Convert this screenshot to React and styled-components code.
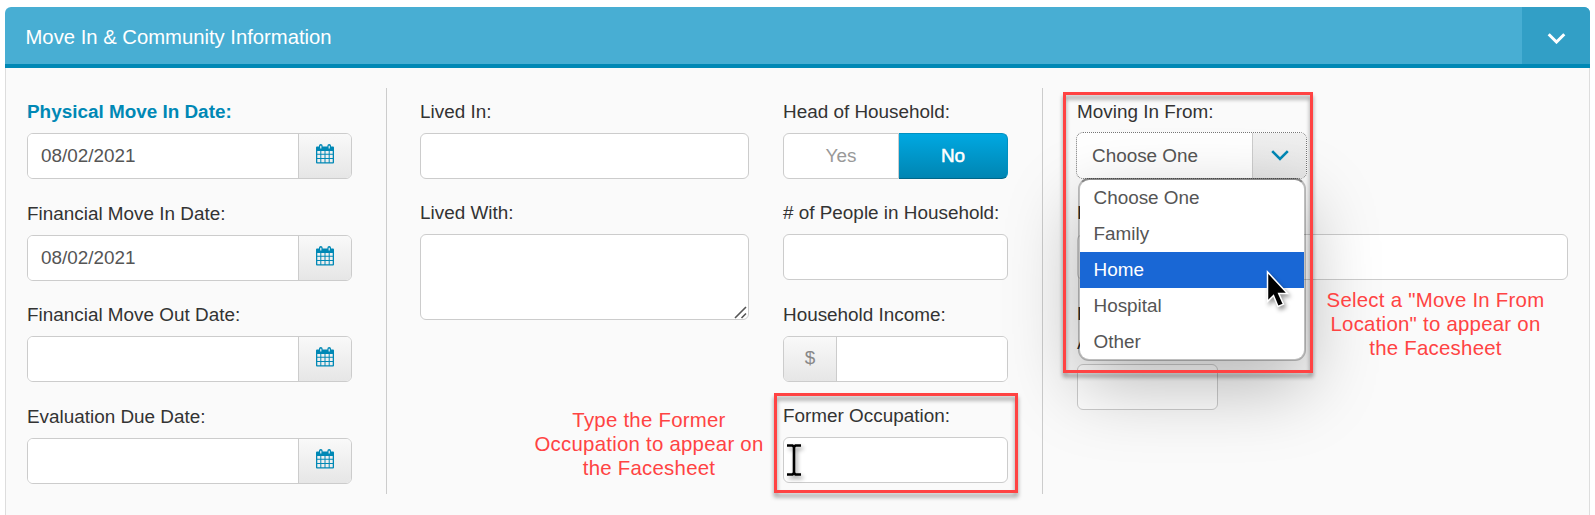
import React from "react";
import styled, { createGlobalStyle, css } from "styled-components";

const GlobalStyle = createGlobalStyle`
  * {
    box-sizing: border-box;
  }
  body {
    margin: 0;
    background: #fff;
    font-family: "Liberation Sans", Arial, sans-serif;
    font-size: 18.9px;
    color: #333;
    overflow: hidden;
  }
`;

const Page = styled.div`
  height: 515px;
  padding: 7px 5px 0;
  overflow: hidden;
`;
const Panel = styled.section`
  width: 1585px;
`;
const Header = styled.header`
  display: flex;
  justify-content: space-between;
  height: 61px;
  border-bottom: 4px solid #0088b5;
  border-radius: 6px 6px 0 0;
  background: #48aed3;
  color: #fff;
  overflow: hidden;
`;
const Title = styled.h1`
  margin: 0;
  padding-left: 20.5px;
  font-size: 20.25px;
  font-weight: 400;
  line-height: 60px;
`;
const Toggle = styled.button`
  display: flex;
  align-items: center;
  justify-content: center;
  width: 68px;
  padding: 5px 0 0 1px;
  border: 0;
  background: #329fc6;
`;
const Body = styled.div`
  display: flex;
  align-items: flex-start;
  height: 460px;
  padding: 20px 21px 0;
  border: 1px solid #ddd;
  border-top: 0;
  background: #fafafa;
`;
const Column = styled.div`
  display: flex;
  flex-direction: column;
  width: ${(p) => p.$width}px;
  margin-right: ${(p) => p.$gap}px;
  gap: ${(p) => p.$rowGap}px;
`;
const Divider = styled.div`
  width: 1px;
  height: 406px;
  margin-right: ${(p) => p.$gap}px;
  background: #ccc;
`;
const Field = styled.div`
  display: flex;
  flex-direction: column;
  gap: 10px;
  margin-top: ${(p) => p.$top || 0}px;

  ${Column} > &:first-child {
    padding-top: 12px;
  }
`;
const Label = styled.label`
  height: 23px;
  line-height: 24px;
  white-space: nowrap;
  font-weight: ${(p) => (p.$required ? 700 : 400)};
  color: ${(p) => (p.$required ? "#0088b5" : "#333")};
`;
const box = css`
  border: 1px solid #ccc;
  border-radius: 6px;
  background: #fff;
  font: 18.9px "Liberation Sans", Arial, sans-serif;
  color: #555;
`;
const Input = styled.input`
  ${box}
  width: ${(p) => (p.$width ? p.$width + "px" : "100%")};
  height: 46px;
  padding: 0 13px;
`;
const TextAreaWrap = styled.div`
  position: relative;
`;
const TextArea = styled.textarea`
  ${box}
  display: block;
  width: 100%;
  height: 86px;
  resize: none;
`;
const Grip = styled.svg`
  position: absolute;
  right: 2px;
  bottom: 1px;
`;
const Group = styled.div`
  ${box}
  display: flex;
  height: 46px;
  overflow: hidden;
`;
const GroupInput = styled.input`
  flex: 1;
  min-width: 0;
  padding: 0 13px;
  border: 0;
  background: #fff;
  font: inherit;
  color: inherit;
`;
const Addon = styled.div`
  display: flex;
  align-items: center;
  justify-content: center;
  width: 53px;
  padding-bottom: ${(p) => (p.$left ? 1 : 4)}px;
  border-left: ${(p) => (p.$left ? 0 : 1)}px solid #ccc;
  border-right: ${(p) => (p.$left ? 1 : 0)}px solid #ccc;
  box-shadow: ${(p) => (p.$left ? "none" : "0 1px 0 #bbb")};
  background: linear-gradient(#f9f9f9, #e6e6e6);
  color: #888;
`;
const Switch = styled.div`
  display: flex;
  height: 46px;
`;
const Choice = styled.button`
  width: ${(p) => (p.$on ? 109 : 116)}px;
  padding: 0;
  border: 1px solid ${(p) => (p.$on ? "#0090c0" : "#ccc")};
  border-radius: ${(p) => (p.$on ? "0 6px 6px 0" : "6px 0 0 6px")};
  border-left-width: ${(p) => (p.$on ? 0 : 1)}px;
  border-bottom-color: ${(p) => (p.$on ? "#006688" : "#ccc")};
  background: ${(p) => (p.$on ? "linear-gradient(#00a8e1, #0085b2)" : "#fff")};
  font: 18.9px "Liberation Sans", Arial, sans-serif;
  color: ${(p) => (p.$on ? "#fff" : "#999")};
  -webkit-text-stroke: ${(p) => (p.$on ? 0.5 : 0)}px #fff;
`;
const SelectWrap = styled.div`
  position: relative;
  width: 231px;
  margin: -1px 0 0 -1px;
`;
const Select = styled.div`
  display: flex;
  height: 47px;
  border: 1px dotted #777;
  border-radius: 7px;
  background: #fff;
  line-height: 46px;
  color: #555;
  overflow: hidden;
`;
const SelectText = styled.span`
  flex: 1;
  padding-left: 15px;
`;
const SelectArrow = styled.span`
  display: flex;
  align-items: center;
  justify-content: center;
  width: 54px;
  border-left: 1px solid #ccc;
  background: linear-gradient(#f0f0f0, #e6e6e6);
`;
const Menu = styled.ul`
  position: absolute;
  z-index: 2;
  top: 46px;
  left: 2px;
  width: 228px;
  height: 183px;
  margin: 0;
  padding: 0;
  border: 2px solid rgba(0, 0, 0, 0.24);
  border-top-color: rgba(0, 0, 0, 0.45);
  border-radius: 11px;
  background: #fff;
  background-clip: padding-box;
  list-style: none;
  overflow: hidden;
  box-shadow: 0 26px 72px rgba(0, 0, 0, 0.27);
`;
const Option = styled.li`
  height: 36px;
  padding-left: 13.5px;
  line-height: 36px;
  background: ${(p) => (p.$active ? "#1967d5" : "transparent")};
  color: ${(p) => (p.$active ? "#fff" : "#555")};
`;
const Highlight = styled.div`
  position: absolute;
  z-index: 3;
  left: ${(p) => p.$x}px;
  top: ${(p) => p.$y}px;
  width: ${(p) => p.$w}px;
  height: ${(p) => p.$h}px;
  border: 3px solid #ff4343;
  filter: drop-shadow(0 4px 2px rgba(0, 0, 0, 0.4));
  pointer-events: none;
`;
const Note = styled.p`
  position: absolute;
  z-index: 3;
  left: ${(p) => p.$x}px;
  top: ${(p) => p.$y}px;
  width: 240px;
  margin: 0;
  font-size: 20.4px;
  line-height: 24px;
  letter-spacing: 0.25px;
  text-align: center;
  white-space: pre-line;
  color: #ff4343;
`;
const Pointer = styled.svg`
  position: absolute;
  z-index: 4;
  left: ${(p) => p.$x}px;
  top: ${(p) => p.$y}px;
  filter: drop-shadow(2px 3px 2px rgba(0, 0, 0, 0.4));
`;

function CalendarIcon() {
  return (
    <svg width="18" height="20" viewBox="0 0 18 20" fill="none">
      <path
        fill="#0088b5"
        fillRule="evenodd"
        d="M1 2.500h2V1.800Q3 0 4.800 0T6.600 1.800v.7h4.800v-.7Q11.400 0 13.200 0T15 1.800v.7h2q1 0 1 1V18.500q0 1-1 1H1q-1 0-1-1V3.500q0-1 1-1zM4.200 1.800v2.800h1.200V1.800zM12.600 1.800v2.800h1.200V1.800zM1.300 7v2.800h3V7zM5.300 7v2.800h3.200V7zM9.500 7v2.800h3.200V7zM13.700 7v2.800h3V7zM1.300 10.800v3.200h3v-3.200zM5.300 10.800v3.200h3.200v-3.200zM9.500 10.800v3.200h3.200v-3.200zM13.700 10.800v3.200h3v-3.200zM1.300 15v3.200h3V15zM5.300 15v3.200h3.200V15zM9.500 15v3.200h3.200V15zM13.700 15v3.200h3V15z"
      />
    </svg>
  );
}

function Chevron({ color, width = 18, stroke = 2.6 }) {
  return (
    <svg width={width} height="11" viewBox="0 0 18 11" fill="none">
      <path d="M1.200 1.200L9 9L16.800 1.200" stroke={color} strokeWidth={stroke} />
    </svg>
  );
}

function DateField({ label, value, required }) {
  return (
    <Field>
      <Label $required={required}>{label}</Label>
      <Group>
        <GroupInput defaultValue={value} />
        <Addon>
          <CalendarIcon />
        </Addon>
      </Group>
    </Field>
  );
}

const origins = ["Choose One", "Family", "Home", "Hospital", "Other"];

function App() {
  return (
    <Page>
      <GlobalStyle />
      <Panel>
        <Header>
          <Title>Move In &amp; Community Information</Title>
          <Toggle>
            <Chevron color="#fff" width={19} stroke={3} />
          </Toggle>
        </Header>
        <Body>
          <Column $width={325} $gap={34} $rowGap={22.7}>
            <DateField label="Physical Move In Date:" value="08/02/2021" required />
            <DateField label="Financial Move In Date:" value="08/02/2021" />
            <DateField label="Financial Move Out Date:" value="" />
            <DateField label="Evaluation Due Date:" value="" />
          </Column>
          <Divider $gap={33} />
          <Column $width={329} $gap={34} $rowGap={22}>
            <Field>
              <Label>Lived In:</Label>
              <Input />
            </Field>
            <Field>
              <Label>Lived With:</Label>
              <TextAreaWrap>
                <TextArea />
                <Grip width="13" height="13" viewBox="0 0 13 13">
                  <path d="M1 12L12 1M7.500 12L12 7.500" stroke="#555" strokeWidth="1.600" />
                </Grip>
              </TextAreaWrap>
            </Field>
          </Column>
          <Column $width={225} $gap={34} $rowGap={22.4}>
            <Field>
              <Label>Head of Household:</Label>
              <Switch>
                <Choice>Yes</Choice>
                <Choice $on>No</Choice>
              </Switch>
            </Field>
            <Field>
              <Label># of People in Household:</Label>
              <Input />
            </Field>
            <Field>
              <Label>Household Income:</Label>
              <Group>
                <Addon $left>$</Addon>
                <GroupInput />
              </Group>
            </Field>
            <Field>
              <Label>Former Occupation:</Label>
              <Input />
            </Field>
          </Column>
          <Divider $gap={34} />
          <Column $width={491} $gap={0} $rowGap={22}>
            <Field>
              <Label>Moving In From:</Label>
              <SelectWrap>
                <Select>
                  <SelectText>Choose One</SelectText>
                  <SelectArrow>
                    <Chevron color="#0088b5" />
                  </SelectArrow>
                </Select>
                <Menu>
                  {origins.map((name) => (
                    <Option key={name} $active={name === "Home"}>
                      {name}
                    </Option>
                  ))}
                </Menu>
              </SelectWrap>
            </Field>
            <Field>
              <Label>L</Label>
              <Input />
            </Field>
            <Field>
              <Label>L</Label>
            </Field>
            <Field $top={-16}>
              <Label>A</Label>
              <Input $width={141} />
            </Field>
          </Column>
        </Body>
      </Panel>
      <Highlight $x={1063} $y={92} $w={250} $h={281} />
      <Highlight $x={774} $y={393} $w={244} $h={100} />
      <Note $x={529} $y={408}>
        {"Type the Former\nOccupation to appear on\nthe Facesheet"}
      </Note>
      <Note $x={1315.5} $y={288}>
        {'Select a "Move In From\nLocation" to appear on\nthe Facesheet'}
      </Note>
      <Pointer $x={786} $y={443} width="16" height="34" viewBox="0 0 16 34">
        <path
          d="M1 2.500h5.500L8 4l1.500-1.500H15M1 31.500h5.500L8 30l1.500 1.500H15M8 3.500v27"
          stroke="#000"
          strokeWidth="2.600"
          fill="none"
        />
      </Pointer>
      <Pointer $x={1266} $y={269} width="24" height="40" viewBox="0 0 24 40">
        <path
          d="M1.500 3v29.500l6-6 4.500 11 5.500-2.300-4.800-10.700h8.800z"
          fill="#000"
          stroke="#fff"
          strokeWidth="1.500"
        />
      </Pointer>
    </Page>
  );
}

export default App;
